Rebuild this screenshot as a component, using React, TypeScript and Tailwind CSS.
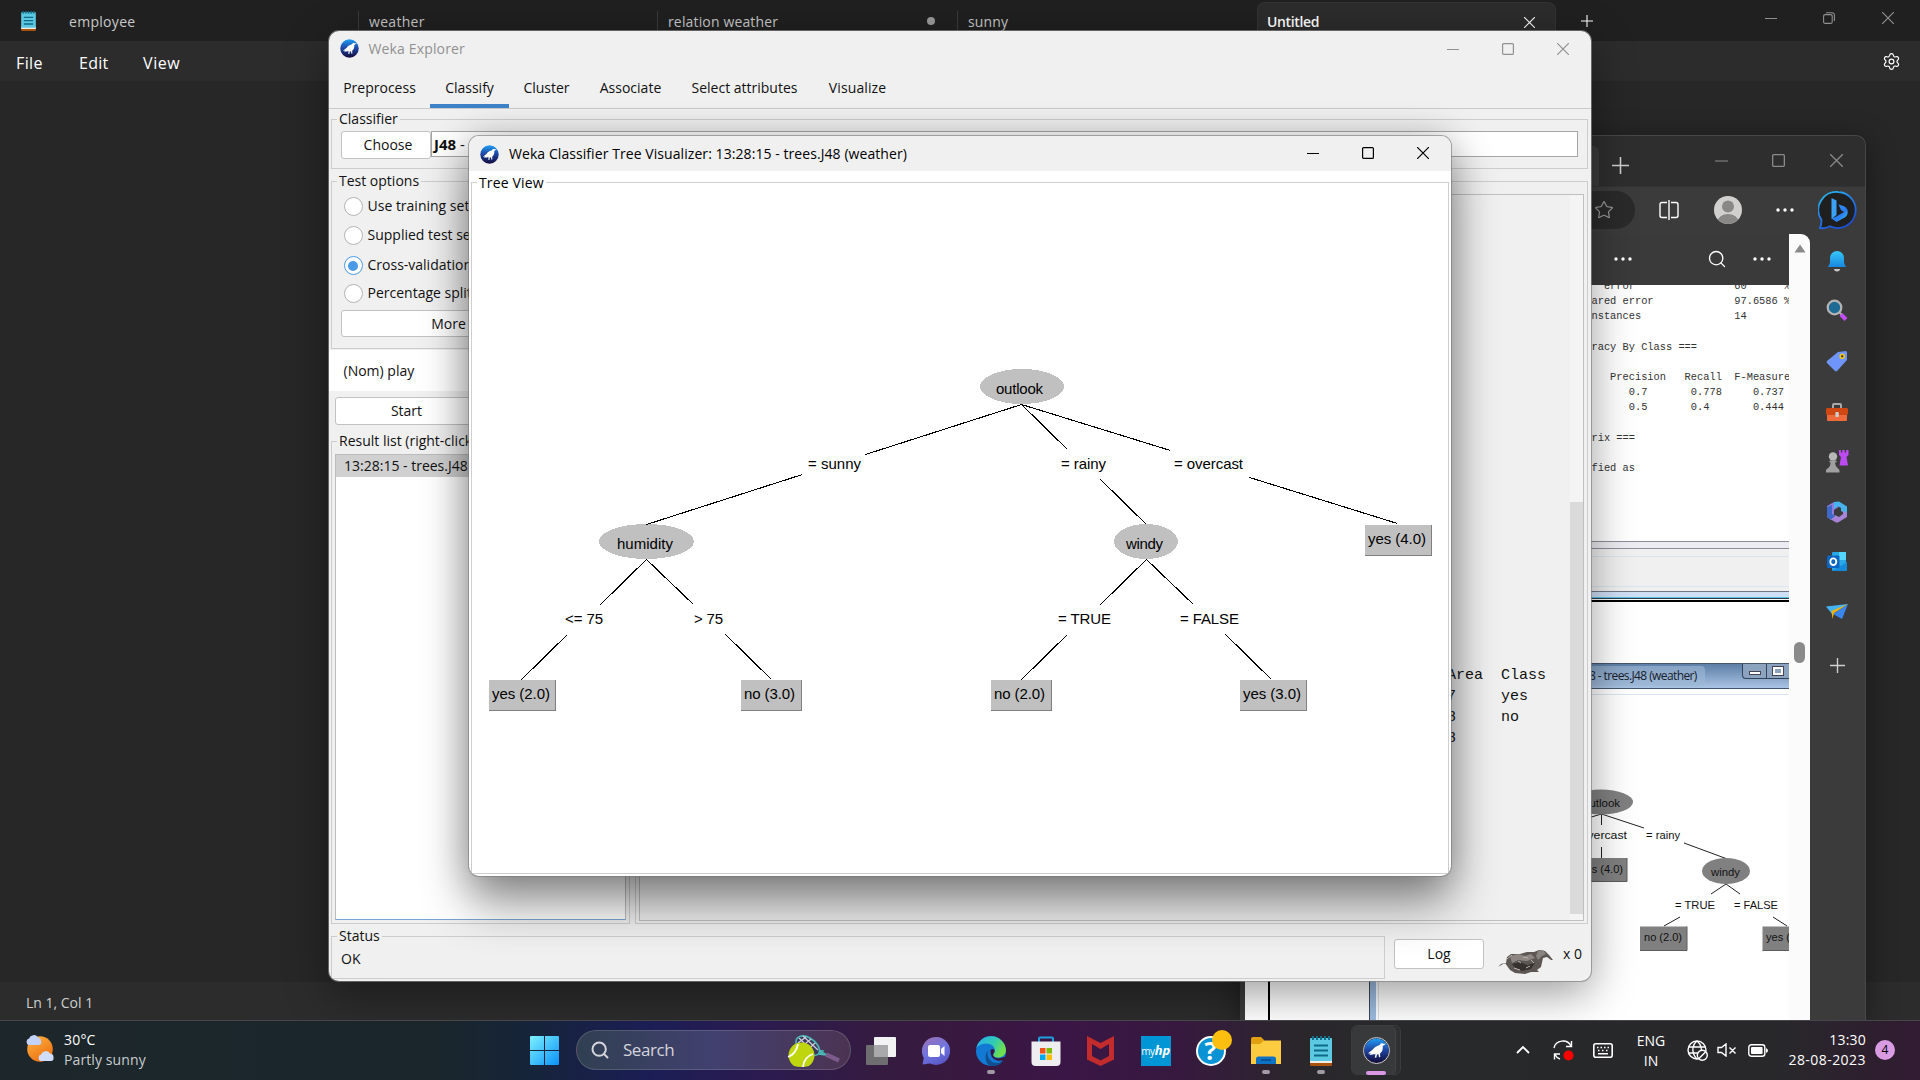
import React from "react";
import { Search, Star, Settings } from "lucide-react";

type Win = { size?: string; className?: string };

function WekaIcon({ className }: { className: string }) {
  return (
    <svg viewBox="0 0 20 20" className={className}>
      <defs>
        <linearGradient id="wk" x1="0" y1="0" x2="0" y2="1">
          <stop offset="0" stopColor="#1fa0f5" />
          <stop offset="0.45" stopColor="#1f4aa8" />
          <stop offset="1" stopColor="#120a3c" />
        </linearGradient>
      </defs>
      <circle cx="10" cy="10" r="9.7" fill="url(#wk)" />
      <path
        d="M17.6 4.6 L15.4 4.6 C14.4 3.9 13 4.4 12.6 5.6 C10.6 6.2 8.2 7.2 6.8 9.4 L3 12.4 L5.4 12.2 L4.2 13.4 C7 13.4 8 12.8 9.2 13 L8.6 15.6 L9.8 15.8 L10.4 13.2 L11.6 13 L12 15.4 L13 15.2 L12.8 12.4 C14.8 11.2 15.2 8.6 15 6.4 Z"
        fill="#fff"
      />
    </svg>
  );
}

function NotepadIcon({ className }: { className: string }) {
  return (
    <svg viewBox="0 0 22 30" className={className}>
      <rect x="0" y="24" width="22" height="6" rx="1" fill="#a9520e" />
      <rect x="0" y="23" width="22" height="4" fill="#f1ece6" />
      <rect x="0" y="2" width="22" height="23" rx="1" fill="#5cc8e2" />
      <path d="M3 0v4M7 0v4M11 0v4M15 0v4M19 0v4" stroke="#0f6f8c" strokeWidth="2" />
      <path d="M4 9.5h14M4 14.5h14M4 19.5h14" stroke="#0d6a88" strokeWidth="2" />
    </svg>
  );
}

const Minimize = ({ size = "size-3", className = "" }: Win) => (
  <svg viewBox="0 0 12 12" className={`${size} ${className}`} stroke="currentColor" fill="none">
    <path d="M0 6.5h12" />
  </svg>
);
const Maximize = ({ size = "size-3", className = "" }: Win) => (
  <svg viewBox="0 0 12 12" className={`${size} ${className}`} stroke="currentColor" fill="none" strokeWidth="1.2">
    <rect x="0.6" y="0.6" width="10.8" height="10.8" rx="1" />
  </svg>
);
const Close = ({ size = "size-3", className = "" }: Win) => (
  <svg viewBox="0 0 12 12" className={`${size} ${className}`} stroke="currentColor" fill="none" strokeWidth="1.2">
    <path d="M0 0l12 12M12 0L0 12" />
  </svg>
);
const Plus = ({ size = "size-3", className = "" }: Win) => (
  <svg viewBox="0 0 12 12" className={`${size} ${className}`} stroke="currentColor" fill="none" strokeWidth="1.1">
    <path d="M0 6h12M6 0v12" />
  </svg>
);
const Dots = ({ className = "" }: Win) => (
  <svg viewBox="0 0 18 4" className={`h-1 w-[18px] fill-current ${className}`}>
    <circle cx="2" cy="2" r="1.7" />
    <circle cx="9" cy="2" r="1.7" />
    <circle cx="16" cy="2" r="1.7" />
  </svg>
);

/* ---------- Notepad ---------- */

function Notepad() {
  return (
    <div className="absolute inset-x-0 top-0 flex h-[1020px] flex-col bg-[#272727] text-sm">
      <div className="flex h-[41px] bg-[#202020] text-[#c8c8c8]">
        <div className="flex w-[58px] pl-[21px] pt-[11px]">
          <NotepadIcon className="h-5 w-[15px]" />
        </div>
        <div className="mt-[11px] h-5 w-[301px] border-r border-[#3a3a3a] pl-[11px] leading-[22px] tracking-[0.300px]">employee</div>
        <div className="mt-[11px] h-5 w-[299px] border-r border-[#3a3a3a] pl-2.5 leading-[22px] tracking-[0.300px]">weather</div>
        <div className="mt-[11px] flex h-5 w-[300px] items-center justify-between border-r border-[#3a3a3a] pl-2.5 pr-[22px] leading-[22px]">
          <span className="pt-px tracking-[0.150px]">relation weather</span>
          <span className="size-2 rounded-full bg-[#9a9a9a]" />
        </div>
        <div className="mt-[11px] h-5 w-[299px] pl-2.5 leading-[22px] tracking-[0.150px]">sunny</div>
        <div className="mt-0.5 flex h-[39px] w-[299px] items-center justify-between rounded-t-lg border border-b-0 border-[#333] bg-[#2c2c2c] pl-[9px] pr-5 font-semibold text-white">
          <span className="tracking-[-0.35px]">Untitled</span>
          <Close size="size-[11px]" />
        </div>
        <div className="flex w-[62px] items-center justify-center pt-px text-white">
          <Plus />
        </div>
        <div className="ml-auto flex h-[35px] items-center pr-0.5 text-[#8f8f8f]">
          <div className="flex w-[58px] justify-center"><Minimize /></div>
          <div className="flex w-[58px] justify-center">
            <svg viewBox="0 0 12 12" className="size-3" fill="none" stroke="currentColor" strokeWidth="1.1">
              <rect x="0.6" y="2.6" width="8.6" height="8.8" rx="1.5" />
              <path d="M3 0.7h6a2.4 2.4 0 0 1 2.4 2.4v6" />
            </svg>
          </div>
          <div className="flex w-[60px] justify-center"><Close /></div>
        </div>
      </div>
      <div className="flex h-10 items-center bg-[#2c2c2c] pl-4 pr-[19px] pt-1 text-base text-white">
        <span className="w-[63px] tracking-[0.4px]">File</span>
        <span className="w-16 tracking-[0.25px]">Edit</span>
        <span className="tracking-[0.6px]">View</span>
        <Settings className="ml-auto size-[19px] -mt-[3px]" strokeWidth={1.5} />
      </div>
      <div className="flex-1" />
      <div className="flex h-[38px] items-center bg-[#2c2c2c] pl-[26px] pt-[3px] text-[#cfcfcf]">Ln 1, Col 1</div>
    </div>
  );
}

/* ---------- Edge browser ---------- */

function Sidebar() {
  const cell = "flex h-[50px] items-center justify-center";
  return (
    <div className="flex w-[55px] flex-col bg-[#3b3b3b] pr-px pt-[2px]">
      <div className={cell}>
        <svg viewBox="0 0 20 22" className="h-[22px] w-5">
          <defs>
            <linearGradient id="bell" x1="0" y1="0" x2="0" y2="1"><stop offset="0" stopColor="#35c8f8" /><stop offset="1" stopColor="#1887e0" /></linearGradient>
          </defs>
          <path d="M10 1a7 7 0 0 0-7 7v5l-2 4h18l-2-4V8a7 7 0 0 0-7-7z" fill="url(#bell)" />
          <path d="M7 19h6a3 2.4 0 0 1-6 0z" fill="#c8c8c8" />
        </svg>
      </div>
      <div className={cell}>
        <svg viewBox="0 0 22 22" className="-mt-0.5 size-[22px]">
          <path d="M13.5 13.5l3 3" stroke="#b0b0b0" strokeWidth="2" />
          <path d="M15 15.5l5 5" stroke="#c04df5" strokeWidth="4" />
          <circle cx="8.5" cy="8.5" r="6.8" fill="#1d6b94" stroke="#b4b4b4" strokeWidth="2.2" />
        </svg>
      </div>
      <div className={cell}>
        <svg viewBox="0 0 22 22" className="size-[22px]">
          <path d="M12 2l8-1 1 1v8L11 21q-1 .8-2 0L1 13q-.8-1 0-2z" fill="#6f95fb" />
          <circle cx="16.2" cy="6.2" r="2" fill="#444" stroke="#f3c518" strokeWidth="1.6" />
        </svg>
      </div>
      <div className={cell}>
        <svg viewBox="0 0 24 20" className="mt-px h-5 w-6">
          <path d="M8 6V3q0-1 1-1h6q1 0 1 1v3" fill="none" stroke="#a9a9a9" strokeWidth="2" />
          <rect x="2" y="9" width="20" height="10" rx="1" fill="#ef6b3c" />
          <rect x="1" y="6" width="22" height="7" rx="1.4" fill="#cf4713" />
          <rect x="10.4" y="10" width="3.4" height="5" rx="1" fill="#cfcfcf" />
        </svg>
      </div>
      <div className={cell}>
        <svg viewBox="0 0 24 24" className="size-6">
          <path d="M14 1v5l2 2-1.500 8.500h8.500L21.500 8l2-2V1h-2.400v2.400h-1.400V1h-2.400v2.400h-1.400V1z" fill="#bb4bf0" />
          <circle cx="8" cy="7.500" r="4.200" fill="#b8b8b8" />
          <path d="M4.500 11.500h7v2h-1.600q.4 4 3.100 6l1.500 1.500v2.500H1V21l1.500-1.500q3-2 3.100-6H4.500z" fill="#a0a0a0" />
        </svg>
      </div>
      <div className={cell}>
        <svg viewBox="0 0 22 22" className="mt-px size-[22px]">
          <path d="M8 1L1 5v11l4 3 3-2V9l6-4z" fill="#8f7ae0" />
          <path d="M8 1l5-.5 8 5V13l-6-3V7l-3-2-4 3z" fill="#45b4ec" />
          <path d="M21 12v4l-9 5.500h-2L5 18.500 9 14l4 2 4-3V9.500z" fill="#a884d8" />
          <path d="M5 18.500L1 16V6l5-2v9l3 2z" fill="#3f69c8" />
        </svg>
      </div>
      <div className={cell}>
        <svg viewBox="0 0 22 22" className="mt-0.5 size-[22px]">
          <rect x="6" y="1" width="14" height="19" rx="1.2" fill="#2aa8ea" />
          <path d="M13 1h7v8h-7z" fill="#55d4fb" />
          <path d="M6 20l15-9v8q0 1-1 1z" fill="#168ad8" />
          <rect x="1" y="4.500" width="12.500" height="12.500" rx="1.200" fill="#0a66c2" />
          <ellipse cx="7.300" cy="10.700" rx="3" ry="3.300" fill="none" stroke="#fff" strokeWidth="1.900" />
        </svg>
      </div>
      <div className={cell}>
        <svg viewBox="0 0 22 18" className="mt-0.5 h-[18px] w-[22px]">
          <path d="M0 3.500L22 1 6 11z" fill="#45b4f5" />
          <path d="M22 1L16 16l-9-5z" fill="#3a86f0" />
          <path d="M22 1L5.500 8l1 8 1.500-6z" fill="#f5b400" />
        </svg>
      </div>
      <div className="flex h-[58px] items-center justify-center text-[#d0d0d0]"><Plus size="size-[15px]" /></div>
    </div>
  );
}

const accuracyReport = [
  "  error                60      %",
  "ared error             97.6586 %",
  "nstances               14",
  "",
  "racy By Class ===",
  "",
  "   Precision   Recall  F-Measure",
  "      0.7       0.778     0.737",
  "      0.5       0.4       0.444",
  "",
  "rix ===",
  "",
  "fied as",
].join("\n");

function SmallTree() {
  return (
    <svg viewBox="1240 695 549 325" className="block h-[325px] w-[549px] shrink-0" fontFamily="Liberation Sans, Arial, sans-serif" fontSize="11.8">
      <g stroke="#222" strokeWidth="1">
        <path d="M1601.500 814L1588 818M1601.500 814V825M1601.500 814L1644 828M1601.500 847V858M1684 843L1726 858.500M1726 884L1711 894M1726 884L1740 894M1680 917L1664 926M1773 917L1787 926" fill="none" />
      </g>
      <g fill="#808080">
        <ellipse cx="1601" cy="802" rx="32" ry="12.500" />
        <ellipse cx="1726" cy="871" rx="24" ry="13" />
        <rect x="1577" y="858" width="50" height="23.500" />
        <rect x="1640" y="926.500" width="47" height="24" />
        <rect x="1762.500" y="926.500" width="50" height="24" />
      </g>
      <path d="M1627 858v23.500h-50M1687 926.500v24h-47M1800 950.500h-37.500" fill="none" stroke="#5c5c5c" />
      <g fill="#111">
        <text x="1583" y="807" textLength="37" lengthAdjust="spacingAndGlyphs">outlook</text>
        <text x="1570" y="839" textLength="57" lengthAdjust="spacingAndGlyphs">= overcast</text>
        <text x="1646" y="839" textLength="34" lengthAdjust="spacingAndGlyphs">= rainy</text>
        <text x="1580" y="873" textLength="43" lengthAdjust="spacingAndGlyphs">yes (4.0)</text>
        <text x="1711" y="876" textLength="29" lengthAdjust="spacingAndGlyphs">windy</text>
        <text x="1675" y="909" textLength="40" lengthAdjust="spacingAndGlyphs">= TRUE</text>
        <text x="1734" y="909" textLength="44" lengthAdjust="spacingAndGlyphs">= FALSE</text>
        <text x="1644" y="941" textLength="38" lengthAdjust="spacingAndGlyphs">no (2.0)</text>
        <text x="1766" y="941" textLength="43" lengthAdjust="spacingAndGlyphs">yes (3.0)</text>
      </g>
      <g>
        <rect x="1240" y="695" width="5" height="325" fill="#3b3b3b" />
        <rect x="1268" y="695" width="2" height="325" fill="#000" />
        <rect x="1369" y="695" width="1" height="325" fill="#3c4654" />
        <rect x="1370" y="695" width="6" height="325" fill="#9dbbe0" />
        <rect x="1378" y="695" width="1" height="325" fill="#d8e2ec" />
      </g>
    </svg>
  );
}

function EdgeBrowser() {
  return (
    <div className="absolute left-[1240px] top-[135px] flex h-[885px] w-[626px] flex-col overflow-hidden rounded-t-[10px] border-r border-t border-[#484848] bg-[#3b3b3b] shadow-[0_6px_30px_rgba(0,0,0,0.4)]">
      <div className="flex h-[50px] bg-[#2e2e2e]">
        <div className="mt-2.5 w-[359px] rounded-tr-md bg-[#3b3b3b]" />
        <div className="flex w-[43px] items-center justify-center pt-2 text-[#cfcfcf]"><Plus size="size-[17px]" /></div>
        <div className="ml-auto flex items-center pb-0.5 text-[#8a8a8a]">
          <div className="flex w-[58px] justify-center"><Minimize size="size-[13px]" /></div>
          <div className="flex w-[57px] justify-center"><Maximize size="size-[13px]" /></div>
          <div className="flex w-[58px] justify-center"><Close size="size-[13px]" /></div>
        </div>
      </div>
      <div className="flex h-[48px] items-center border-t border-[#333] pb-0.5 text-white">
        <div className="flex h-[38px] w-[395px] items-center justify-end rounded-r-full bg-[#2a2a2a] pr-[21px] text-[#9a9a9a]">
          <Star className="size-5" strokeWidth={1.4} />
        </div>
        <svg viewBox="0 0 20 20" className="ml-6 size-5" fill="none" stroke="currentColor" strokeWidth="1.400">
          <path d="M8 2.500H3q-2 0-2 2v11q0 2 2 2h5M12 2.500h5q2 0 2 2v11q0 2-2 2h-5M10 0v20" />
        </svg>
        <svg viewBox="0 0 28 28" className="ml-[35px] size-7">
          <clipPath id="av"><circle cx="14" cy="14" r="14" /></clipPath>
          <g clipPath="url(#av)">
            <rect width="28" height="28" fill="#d2d0ce" />
            <circle cx="14" cy="10.500" r="6" fill="#8a8886" />
            <ellipse cx="14" cy="26" rx="10.500" ry="8" fill="#8a8886" />
          </g>
        </svg>
        <Dots className="ml-[34px]" />
        <svg viewBox="0 0 40 40" className="ml-6 size-10">
          <defs>
            <linearGradient id="bingring" x1="0" y1="0" x2="0.6" y2="1"><stop offset="0" stopColor="#25c3ee" /><stop offset="0.6" stopColor="#2475e8" /><stop offset="1" stopColor="#1a4fd8" /></linearGradient>
            <linearGradient id="bingb" x1="0" y1="0" x2="1" y2="1"><stop offset="0" stopColor="#2f9cf4" /><stop offset="0.6" stopColor="#2a7cf0" /><stop offset="1" stopColor="#35d6e8" /></linearGradient>
          </defs>
          <path d="M20 2a18 18 0 1 1-8 34.300Q7 39 2 38q1.500-3 1.500-8A18 18 0 0 1 20 2z" fill="#1f1f1f" stroke="url(#bingring)" strokeWidth="1.800" />
          <path d="M13.500 8l5 2.500v14.500l-5 4z" fill="#3aa2f6" />
          <path d="M13.500 28.500l5 3.500 9-5q3-3 2-7-1-3-4-4l-5-1.500 2.500 5.500 3 2-8.500 5z" fill="url(#bingb)" />
        </svg>
      </div>
      <div className="flex min-h-0 flex-1">
        <div className="flex w-[549px] flex-col bg-white">
          <div className="flex h-[51px] shrink-0 items-center justify-end bg-[#3a3a3a] pb-px pr-[18px] text-white">
            <Dots />
            <Search className="ml-[75px] mr-[26px] size-5" strokeWidth={1.6} />
            <Dots />
          </div>
          <div className="h-[256px] shrink-0 overflow-hidden pl-[351.500px]">
            <pre className="-mt-[6px] whitespace-pre font-['Liberation_Mono',monospace] text-[10.350px] leading-[15.170px] text-[#333]">{accuracyReport}</pre>
          </div>
          <div className="h-[8px] shrink-0 border-y border-[#8e8e98] bg-[#ececf2]" />
          <div className="h-[42px] shrink-0 bg-[#f0f0f0] pt-[7px]"><div className="h-[31px] border-y border-[#dbe4ec]" /></div>
          <div className="h-[6px] shrink-0 border-t border-[#707888] bg-[#cfe0f6]" />
          <div className="h-[2px] shrink-0 border-b border-[#2c3c48] bg-[#58c4e4]" />
          <div className="mt-[1px] h-[2px] shrink-0 bg-black" />
          <div className="mt-[61px] flex h-[26px] shrink-0 items-start border-y border-[#46566c] bg-gradient-to-b from-[#5d7fa6] to-[#a9c4e4]">
            <span className="ml-[341px] mt-0.5 whitespace-nowrap rounded bg-[#9fb8d6]/60 px-2 text-[12px] leading-5 tracking-[-0.600px] text-[#16202c]">8 - trees.J48 (weather)</span>
            <div className="ml-auto flex h-[15px] rounded-bl border-b border-l border-[#33445a] bg-[#8ba3bf]">
              <div className="flex w-6 items-center justify-center border-r border-[#33445a]"><span className="mt-1 h-1 w-3 border border-[#445] bg-white" /></div>
              <div className="flex w-[22px] items-center justify-center"><span className="h-2 w-2.5 border-2 border-white outline outline-[#445]" /></div>
            </div>
          </div>
          <div className="mt-[5px] h-px shrink-0 bg-[#dbe6ee]" />
          <SmallTree />
        </div>
        <div className="flex w-[21px] flex-col items-center rounded-tr-[9px] bg-[#fbfbfb]">
          <svg viewBox="0 0 12 9" className="mt-2.5 h-[9px] w-3"><path d="M6 0.500L11.500 8.500H0.500z" fill="#8a8a8a" /></svg>
          <div className="mt-[389px] h-[21px] w-[11px] rounded-full bg-[#8a8a8a]" />
        </div>
        <Sidebar />
      </div>
    </div>
  );
}

/* ---------- Weka Explorer ---------- */

function Group({ title, className, children }: { title: string; className: string; children?: React.ReactNode }) {
  return (
    <div className={`flex flex-col border border-[#cdcdcd] ${className}`}>
      <span className="z-0 -mt-[11px] ml-[5px] h-5 self-start whitespace-nowrap bg-[#f0f0f0] px-0.5 leading-5">{title}</span>
      {children}
    </div>
  );
}

const button = "flex items-center justify-center whitespace-nowrap rounded-[3px] border border-[#c2c2c2] bg-white";

function Radio({ label, on, className }: { label: string; on?: boolean; className: string }) {
  return (
    <div className={`flex items-center gap-[5px] whitespace-nowrap pl-[11.500px] ${className}`}>
      <span className={on ? "flex size-[19px] items-center justify-center rounded-full border border-[#4a9ae8] bg-white" : "size-[19px] rounded-full border border-[#b4b4b4] bg-white"}>
        {on && <span className="size-[10px] rounded-full bg-[#4a9ae8]" />}
      </span>
      <span className="-mt-px">{label}</span>
    </div>
  );
}

function Bird() {
  return (
    <svg viewBox="0 0 56 28" className="h-7 w-14">
      <path d="M0 19l5-3 3-1 1-6 4-3 9 0 7-2 7 0 5-2 6 1 4 4 4 5-2 0-4-3-4 1-2 9-4 3 2 2-8 0-6 2-10-1-5-3-5-7-4 1-3 3z" fill="#5d5754" />
      <path d="M12 8l8-2 7 2 6-2 4 4-8 3-9-1-6 3z" fill="#8d8682" />
      <path d="M14 16l8-2 7 3 8-2-4 6-9 2-7-3z" fill="#36312f" />
      <path d="M40 3l5-1 3 4-4 2-4 4-2-4z" fill="#8a8480" />
      <path d="M9 11l5-4M16 20l6 2M25 9l5 1M28 20l4-2M20 13l3 2M33 12l3 3" stroke="#b8b0aa" />
    </svg>
  );
}

function Explorer() {
  return (
    <div className="absolute left-[329px] top-[31px] flex h-[950px] w-[1262px] flex-col overflow-hidden rounded-[10px] bg-[#f0f0f0] text-sm text-[#111] shadow-[0_0_0_1px_rgba(130,130,130,0.7),0_12px_44px_rgba(0,0,0,0.4)]">
      <div className="mb-0.5 flex h-[35px] items-center pr-px text-[#919191]">
        <WekaIcon className="ml-[10.500px] size-[19px]" />
        <span className="ml-2.5 tracking-[0.15px]">Weka Explorer</span>
        <div className="ml-auto flex">
          <div className="flex w-[55px] justify-center"><Minimize /></div>
          <div className="flex w-[55px] justify-center"><Maximize /></div>
          <div className="flex w-[55px] justify-center"><Close /></div>
        </div>
      </div>
      <div className="flex h-[41px] border-b border-[#cacaca] leading-10">
        <span className="w-[101px] text-center">Preprocess</span>
        <span className="w-[79px] border-b-4 border-[#3d82c8] text-center">Classify</span>
        <span className="w-[75px] text-center">Cluster</span>
        <span className="w-[93px] text-center">Associate</span>
        <span className="w-[135px] text-center">Select attributes</span>
        <span className="w-[91px] text-center tracking-[0.100px]">Visualize</span>
      </div>
      <Group title="Classifier" className="ml-0.5 mr-[3px] mt-2.5 h-[50px] shrink-0">
        <div className="flex px-[9px] pt-0.5">
          <div className={`${button} h-7 w-[90px] pl-1`}>Choose</div>
          <div className="h-[26px] flex-1 whitespace-nowrap border border-[#a6a6a6] bg-white pl-0.5 text-[15px] leading-[24px]">
            <b>J48</b> -
          </div>
        </div>
      </Group>
      <div className="ml-0.5 mr-[3px] mt-3 flex h-[743px] gap-[5px]">
        <div className="flex w-[299px] flex-col">
          <Group title="Test options" className="h-[168px] shrink-0">
            <Radio label="Use training set" className="mt-[5px] h-[21px]" />
            <Radio label="Supplied test set" className="mt-2 h-[21px]" />
            <Radio label="Cross-validation" on className="mt-[9px] h-[21px]" />
            <Radio label="Percentage split" className="mt-[7px] h-[21px]" />
            <div className={`${button} mx-[9px] mt-1.5 h-[27px]`}>More options...</div>
          </Group>
          <div className="-ml-0.5 mt-[1px] flex h-[41px] shrink-0 items-center bg-white pl-[14.500px]">(Nom) play</div>
          <div className="mt-[6px] flex shrink-0 gap-1 px-1">
            <div className={`${button} h-7 w-[143px]`}>Start</div>
            <div className={`${button} h-7 flex-1`}>Stop</div>
          </div>
          <Group title="Result list (right-click for options)" className="mt-4 flex-1">
            <div className="mx-[3px] mb-[3px] mt-[3px] flex-1 border border-[#bcbcbc] border-b-[#7ba3cf] bg-white">
              <div className="h-[22px] bg-[#d0d0d0] pl-[8px] leading-[22px]">13:28:15 - trees.J48</div>
            </div>
          </Group>
        </div>
        <Group title="Classifier output" className="flex-1">
          <div className="mx-[3px] mb-[2px] mt-[3px] flex flex-1 justify-end border border-[#c0c0c0]">
            <pre className="mt-[471px] w-[159px] font-['Liberation_Mono',monospace] text-[15px] leading-[20.900px]">{"PRC Area  Class\n0.847     yes\n0.738     no\n0.808"}</pre>
            <div className="flex w-[13px] flex-col bg-[#f4f4f4] pt-[307px]">
              <div className="h-[412px] bg-[#dadada]" />
            </div>
          </div>
        </Group>
      </div>
      <div className="mx-0.5 mt-3 flex h-[43px]">
        <Group title="Status" className="w-[1054px]">
          <span className="mt-[3px] pl-[9px]">OK</span>
        </Group>
        <div className={`${button} ml-[9px] mt-[3px] h-[30px] w-[90px]`}>Log</div>
        <div className="ml-[14px] mt-[12px]"><Bird /></div>
        <span className="ml-[9px] mt-[8px]">x 0</span>
      </div>
    </div>
  );
}

/* ---------- Tree visualizer ---------- */

const edges = [
  [1021, 404, 865, 454], [802, 474, 646, 524],
  [1021, 404, 1067, 449], [1100, 479, 1146, 524],
  [1021, 404, 1170, 450], [1249, 477, 1397, 523],
  [646, 559, 600, 604], [567, 634, 521, 679],
  [646, 559, 693, 604], [725, 634, 771, 679],
  [1146, 559, 1100, 604], [1067, 634, 1021, 679],
  [1146, 559, 1193, 604], [1225, 634, 1271, 679],
];
const ovals = [[980, 369, 84], [599, 524, 95], [1114, 524, 64]];
const leaves = [[489, 680, 67], [741, 680, 61], [991, 680, 61], [1240, 680, 67], [1365, 525, 67]];
const labels: [number, number, number, string][] = [
  [996, 394, 47, "outlook"], [808, 469, 53, "= sunny"], [1061, 469, 45, "= rainy"], [1174, 469, 69, "= overcast"],
  [617, 549, 56, "humidity"], [1126, 549, 37, "windy"], [1368, 544, 58, "yes (4.0)"],
  [565, 624, 38, "<= 75"], [694, 624, 29, "> 75"], [1058, 624, 53, "= TRUE"], [1180, 624, 59, "= FALSE"],
  [492, 699, 58, "yes (2.0)"], [744, 699, 51, "no (3.0)"], [994, 699, 51, "no (2.0)"], [1243, 699, 58, "yes (3.0)"],
];

function TreeVisualizer() {
  return (
    <div className="absolute left-[469px] top-[136px] flex h-[740px] w-[982px] flex-col overflow-hidden rounded-[10px] bg-white text-sm text-black shadow-[0_0_0_1px_rgba(120,120,120,0.6),0_28px_48px_rgba(0,0,0,0.42),0_0_36px_rgba(0,0,0,0.22)]">
      <div className="flex h-9 items-center bg-[#f0f0f0] pr-px pt-px">
        <WekaIcon className="ml-[11px] size-[19px]" />
        <span className="ml-2.5 tracking-[0.07px]">Weka Classifier Tree Visualizer: 13:28:15 - trees.J48 (weather)</span>
        <div className="-mt-0.5 ml-auto flex">
          <div className="flex w-[55px] justify-center"><Minimize /></div>
          <div className="flex w-[55px] justify-center"><Maximize /></div>
          <div className="flex w-[55px] justify-center"><Close /></div>
        </div>
      </div>
      <div className="mx-0.5 mb-0.5 mt-[11px] flex flex-1 flex-col border border-[#cfcfcf]">
        <span className="-mt-2.5 ml-[5px] h-5 self-start bg-white px-0.5 leading-5 tracking-[0.15px]">Tree View</span>
        <svg viewBox="472 193 976 680" className="h-[680px] w-[976px]" fontFamily="Liberation Sans, Arial, sans-serif" fontSize="15">
          {ovals.map(([x, y, w]) => (
            <ellipse key={x} cx={x + w / 2} cy={y + 17.5} rx={w / 2} ry="17.500" fill="#c0c0c0" shapeRendering="crispEdges" />
          ))}
          {leaves.map(([x, y, w]) => (
            <g key={x} shapeRendering="crispEdges">
              <rect x={x} y={y} width={w} height="31" fill="#808080" />
              <rect x={x} y={y} width={w - 1} height="30" fill="#c0c0c0" />
            </g>
          ))}
          {edges.map(([a, b, c, d]) => (
            <line key={`${a}-${b}-${c}`} x1={a + 0.5} y1={b + 0.5} x2={c + 0.5} y2={d + 0.5} stroke="#000" strokeWidth="1.100" shapeRendering="crispEdges" />
          ))}
          {labels.map(([x, y, w, t]) => (
            <text key={`${x}-${y}`} x={x} y={y} textLength={w}>{t}</text>
          ))}
        </svg>
      </div>
    </div>
  );
}

/* ---------- Taskbar ---------- */

function TaskbarApp({ children, dot }: { children: React.ReactNode; dot?: boolean }) {
  return (
    <div className="flex h-[59px] w-[55px] flex-col items-center">
      <div className="flex h-[48px] w-full items-center justify-center pt-[11px]">{children}</div>
      {dot && <span className="mt-[1px] h-1 w-2 rounded-full bg-[#a09aa4]" />}
    </div>
  );
}

function Taskbar() {
  return (
    <div className="absolute inset-x-0 top-[1020px] flex h-[60px] border-t border-[#46464a] bg-[linear-gradient(90deg,#1d272b_0px,#1a262c_440px,#16243a_530px,#1b1e55_650px,#2b1b50_760px,#351b40_880px,#38183f_960px,#3a1646_1060px,#37193f_1180px,#2a272b_1300px,#28292b_1400px,#28282b_1780px,#2f1d30_1890px,#321b33_1920px)] text-sm text-white">
      <div className="flex w-[517px] pl-[25px]">
        <svg viewBox="0 0 30 30" className="mt-[12px] h-[30px] w-[30px]">
          <defs><linearGradient id="sun" x1="0.2" y1="0" x2="0.800" y2="1"><stop offset="0" stopColor="#fbb040" /><stop offset="1" stopColor="#ee6a0c" /></linearGradient></defs>
          <circle cx="15" cy="16" r="12.800" fill="url(#sun)" />
          <path d="M3.500 12a3.500 3.500 0 0 1 .5-6.500A5 5 0 0 1 13 4.500a3.700 3.700 0 0 1 3 3.600Q17 12 13.500 12z" fill="#c3d3f7" />
          <path d="M15.500 28a3.500 3.500 0 0 1 .5-6.500A5 5 0 0 1 25 20.500a3.700 3.700 0 0 1 3.500 3.600Q29 28 26 28z" fill="#cfdcfa" />
        </svg>
        <div className="ml-[9px] flex flex-col pt-[9px] leading-5">
          <span className="tracking-[0.200px]">30°C</span>
          <span className="tracking-[0.100px] text-[#c9cccf]">Partly sunny</span>
        </div>
      </div>
      <div className="flex w-[55px] justify-center pt-[15px]">
        <svg viewBox="0 0 29 29" className="size-[29px]">
          <defs><linearGradient id="st" x1="0" y1="0" x2="1" y2="1"><stop offset="0" stopColor="#7df0ff" /><stop offset="1" stopColor="#0a92f8" /></linearGradient></defs>
          <path d="M1 0h13v14H0V1q0-1 1-1zM15 0h13q1 0 1 1v13H15zM0 15h14v14H1q-1 0-1-1zM15 15h14v13q0 1-1 1H15z" fill="url(#st)" />
        </svg>
      </div>
      <div className="ml-1 mt-[9px] flex h-10 w-[275px] items-center rounded-full border border-white/15 bg-gradient-to-r from-[#303f52] via-[#41406f] to-[#4b3352] pl-[13px] pr-[9px] text-[17px] text-[#d4d4dc]">
        <Search className="size-5" strokeWidth={2.4} />
        <span className="ml-[13px] mt-px tracking-[-0.450px]">Search</span>
        <svg viewBox="0 0 54 34" className="ml-auto mt-0.5 h-[34px] w-[54px]">
          <path d="M34 20l-4-4 6 1z" fill="none" stroke="#49b8b8" strokeWidth="1.500" />
          <path d="M9 8C9 2 16 0 23 4s11 11 9 15-11 3-17-1S9 12 9 8z" fill="#3a3a5c" stroke="#49b8b8" strokeWidth="1.600" />
          <path d="M12 4l14 14M16 2l15 14M11 8l11 11M24 5L13 14M28 9L17 19M19 3l-8 6" stroke="#cfcad8" strokeWidth="1.300" />
          <path d="M32 17l8 4M31 20l8 1" stroke="#49b8b8" strokeWidth="1.400" />
          <path d="M39 20.500l13 6" stroke="#7d5a8c" strokeWidth="4.500" />
          <path d="M7 32a13 13 0 1 1 15 0q-7.500 2-15 0z" fill="#bfd60f" />
          <path d="M1 23q8-3 10-13M16 33q1-10 10-13" fill="none" stroke="#fff" strokeWidth="1.800" />
        </svg>
      </div>
      <div className="ml-[2px] flex">
        <TaskbarApp>
          <svg viewBox="0 0 30 28" className="h-7 w-[30px]">
            <rect x="8" y="0" width="22" height="20" rx="1" fill="#f2f2f2" />
            <rect x="0" y="8" width="22" height="20" rx="1" fill="#6e6e70" />
            <rect x="8" y="8" width="14" height="12" fill="#a9a9ab" />
          </svg>
        </TaskbarApp>
        <TaskbarApp>
          <svg viewBox="0 0 28 28" className="size-7">
            <defs><linearGradient id="ch" x1="0.200" y1="0" x2="0.700" y2="1"><stop offset="0" stopColor="#9a72b8" /><stop offset="0.500" stopColor="#6f74e0" /><stop offset="1" stopColor="#5656c4" /></linearGradient></defs>
            <path d="M14 0a14 14 0 1 1-6 26.600L0.500 27.500 1.800 21A14 14 0 0 1 14 0z" fill="url(#ch)" />
            <rect x="6" y="8" width="12" height="12" rx="2" fill="#fff" />
            <path d="M19 12l3.500-3v10L19 16z" fill="#fff" />
          </svg>
        </TaskbarApp>
        <TaskbarApp dot>
          <svg viewBox="0 0 30 30" className="size-[30px]">
            <defs>
              <linearGradient id="e1" x1="0" y1="0" x2="1" y2="0.400"><stop offset="0" stopColor="#29b0ee" /><stop offset="0.600" stopColor="#30c9b8" /><stop offset="1" stopColor="#6fe04c" /></linearGradient>
            </defs>
            <circle cx="15" cy="15" r="15" fill="#1279d4" />
            <path d="M0.300 12.500A15 15 0 0 1 30 14c0 5-4 7.500-8 7.500-3 0-5-1-5-2.500 0-1 2-2 2-4.500C19 10.500 15 7.500 10 7.500c-5 0-9 3-9.700 5z" fill="url(#e1)" />
            <path d="M12 14c-2 6 2 13 9 13 3 0 5.500-1 7-3-3 5-8 6.500-13 6C9 29 8 19 12 14z" fill="#124f8e" />
            <path d="M14.500 14q2-2 3.800 0 .7 1.500-.8 3.500-1 2 .5 3.200 2 1.800 5 1.500 3.500-.2 5-1.500l1.500 1.500-1 1.500q-3.500 1.500-7.500.8-7-2-6.500-10.500z" fill="#381640" />
          </svg>
        </TaskbarApp>
        <TaskbarApp>
          <svg viewBox="0 0 30 30" className="size-[30px]">
            <path d="M8 6V2.500Q8 1.500 9 1.500h12q1 0 1 1V6" fill="none" stroke="#1f9fe0" strokeWidth="2" />
            <path d="M0.500 5.500h29V26q0 4-4 4h-21q-4 0-4-4z" fill="#eeeef0" />
            <path d="M9 12h5.500v5.500H9z" fill="#f1511b" /><path d="M15.500 12H21v5.500h-5.500z" fill="#80bc06" />
            <path d="M9 18.500h5.500V24H9z" fill="#00a8ee" /><path d="M15.500 18.500H21V24h-5.500z" fill="#fbbc09" />
          </svg>
        </TaskbarApp>
        <TaskbarApp>
          <svg viewBox="0 0 27 30" className="h-[30px] w-[27px]">
            <path fillRule="evenodd" d="M0 0l13.500 7L27 0v23.500L13.500 30 0 23.500zM5 8v12l8.500 4.500L22 20V8l-8.500 5z" fill="#c22c2c" />
          </svg>
        </TaskbarApp>
        <TaskbarApp>
          <div className="flex size-[30px] items-center justify-center bg-[#0096d6] text-[10px] leading-none tracking-[-0.300px]">
            my<b className="text-[13px] italic">hp</b>
          </div>
        </TaskbarApp>
        <TaskbarApp>
          <div className="relative flex size-[30px] items-center justify-center rounded-full border-2 border-white bg-[#0a93d4] text-[25px] font-bold leading-none">
            ?<span className="absolute -top-[8px] left-[14px] size-5 rounded-full bg-[#fdbf0f]" />
          </div>
        </TaskbarApp>
        <TaskbarApp dot>
          <svg viewBox="0 0 30 28" className="h-7 w-[30px]">
            <path d="M0 2q0-2 2-2h8l3 3v6H0z" fill="#e0a010" />
            <path d="M0 7h9l4-3.500h17V27H0z" fill="#fccb3f" />
            <path d="M5 27v-5q0-2.500 2.500-2.500h15q2.500 0 2.500 2.500v5z" fill="#0f72c4" />
            <path d="M10 23h10" stroke="#074d8c" strokeWidth="1.500" />
          </svg>
        </TaskbarApp>
        <TaskbarApp dot><NotepadIcon className="h-[30px] w-[22px]" /></TaskbarApp>
        <div className="ml-[3px] mt-1 h-[50px] w-[50px] rounded-md border border-[#3a3b3d] bg-[#2f3032]">
          <div className="flex h-[49px] w-11 flex-col items-center rounded-md border-r border-[#444] bg-[#38393b] pl-[5px]">
            <div className="mt-[11px] rounded-full border border-[#c8c8d0]"><WekaIcon className="block size-[25px]" /></div>
            <span className="mt-[7px] h-1 w-5 rounded-full bg-[#da98e2]" />
          </div>
        </div>
      </div>
      <div className="ml-auto flex h-[58px] items-center pr-[25px]">
        <svg viewBox="0 0 14 8" className="h-2 w-3.5" fill="none" stroke="currentColor" strokeWidth="1.800"><path d="M1 7l6-6 6 6" /></svg>
        <svg viewBox="0 0 22 22" className="ml-[22px] h-[22px] w-[22px]" fill="none" stroke="currentColor" strokeWidth="1.400">
          <path d="M2 9a9 8.500 0 0 1 17-2M19.500 2v5.500H14M8 20a9 8 0 0 1-5-4.500M2.500 20.500v-5.500H8" />
          <circle cx="16.500" cy="16.500" r="5" fill="#f00" stroke="none" />
        </svg>
        <svg viewBox="0 0 20 15" className="ml-[19px] h-[15px] w-5" fill="none" stroke="currentColor" strokeWidth="1.600">
          <rect x="0.800" y="0.800" width="18.400" height="13.400" rx="2" />
          <path d="M4 4.500h1.500M7.500 4.500h1.500M11 4.500h1.500M14.500 4.500h1.500M5 7.500h1.500M9 7.500h1.500M13 7.500h1.500M5 10.800h10" />
        </svg>
        <div className="ml-6 flex w-7 flex-col items-center pt-0.5 leading-5"><span>ENG</span><span>IN</span></div>
        <svg viewBox="0 0 21 21" className="ml-[22px] size-[21px]" fill="none" stroke="currentColor" strokeWidth="1.400">
          <circle cx="10" cy="10" r="9" />
          <path d="M1.500 7h17M1.500 13h9M10 1c-6 5-5 13 0 18M10 1c3 2.500 4.500 5.500 4.300 9" />
          <circle cx="15.300" cy="15.300" r="5" fill="#28292b" /><path d="M12 18.500l6.500-6.500" />
        </svg>
        <svg viewBox="0 0 20 14" className="ml-[9px] h-3.5 w-5" fill="none" stroke="currentColor" strokeWidth="1.400">
          <path d="M1 4.500h3.500L9 1v12L4.500 9.500H1zM12.500 4.500l6 6M18.500 4.500l-6 6" />
        </svg>
        <svg viewBox="0 0 20 13" className="ml-[11px] h-[13px] w-5">
          <rect x="0.800" y="0.800" width="16" height="11.400" rx="2.500" fill="none" stroke="currentColor" strokeWidth="1.400" />
          <rect x="3" y="3" width="11.600" height="7" rx="1" fill="currentColor" /><path d="M18 4q2 1 2 2.500T18 9z" fill="currentColor" />
        </svg>
        <div className="ml-[19px] flex w-[79px] flex-col items-end whitespace-nowrap leading-5"><span className="tracking-[0.200px]">13:30</span><span className="tracking-[0.450px]">28-08-2023</span></div>
        <span className="ml-[9px] flex size-5 items-center justify-center rounded-full bg-[#d99ce3] text-xs text-black">4</span>
      </div>
    </div>
  );
}

export default function App() {
  return (
    <div className="relative h-[1080px] w-[1920px] overflow-hidden bg-[#272727] font-['Open_Sans','Noto_Sans',sans-serif]">
      <Notepad />
      <EdgeBrowser />
      <Explorer />
      <TreeVisualizer />
      <Taskbar />
    </div>
  );
}
